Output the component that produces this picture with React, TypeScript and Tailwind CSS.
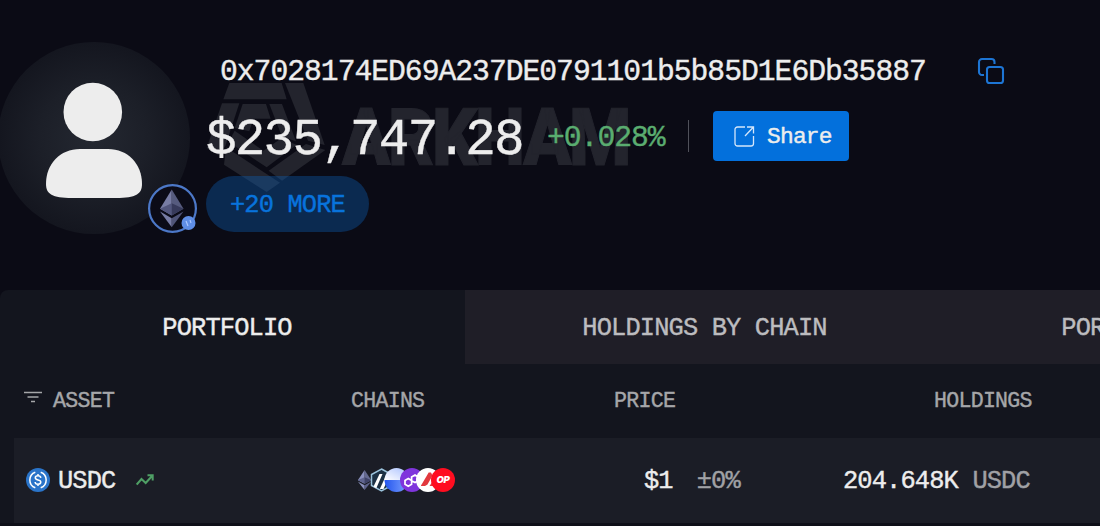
import { clsx } from "clsx";

const TABS = [
  { label: "PORTFOLIO", active: true },
  { label: "HOLDINGS BY CHAIN", active: false },
  { label: "PORTFOLIO ARCHIVE", active: false },
];

function Watermark() {
  return (
    <svg
      className="pointer-events-none absolute left-[200px] top-[78px]"
      width="440"
      height="120"
      viewBox="0 0 440 120"
    >
      <g fill="#23242d">
        <g transform="scale(0.33333)">
          <path d="M88 15H245L260 64H70Z" />
          <path d="M255 15H310L374 201L324 188Z" />
          <path d="M376 216L246 308L206 278L318 198Z" />
          <path d="M78 208L240 314L200 342L72 260Z" />
          <path d="M66 76H118L76 204L56 232L20 210Z" />
          <path d="M128 78H198L212 122H160L148 160L104 150Z" />
          <path d="M208 78H246L288 190L246 176Z" />
          <path d="M104 158L190 218L242 182L290 200L200 268L86 192Z" />
        </g>
        <text
          x="142"
          y="87"
          fontSize="80"
          fontWeight="900"
          textLength="287"
          lengthAdjust="spacingAndGlyphs"
          className="font-['Roboto',sans-serif]"
          stroke="#23242d"
        >
          ARKHAM
        </text>
      </g>
    </svg>
  );
}

function EthGlyph() {
  return (
    <>
      <path d="M12 1L5 12.4L12 16.4Z" fill="#8a90bd" />
      <path d="M12 1L19 12.4L12 16.4Z" fill="#646990" />
      <path d="M12 9.2L5 12.4L12 16.4Z" fill="#5f648f" />
      <path d="M12 9.2L19 12.4L12 16.4Z" fill="#3f4368" />
      <path d="M5 14L12 18.1V23.4Z" fill="#8a90bd" />
      <path d="M19 14L12 18.1V23.4Z" fill="#5c618a" />
    </>
  );
}

function Avatar() {
  return (
    <div className="relative -ml-[2px] h-[192px] w-[192px] rounded-full bg-[radial-gradient(circle,#242831_0%,#1c1f28_40%,#14161f_70%)]">
      <svg width="192" height="192" viewBox="0 0 192 192" fill="#ededed">
        <circle cx="94.8" cy="70" r="29.3" />
        <path d="M48 142C48 122 62 107 82 107H110C130 107 144 122 144 142C144 152 138 156 118 156H74C54 156 48 152 48 142Z" />
      </svg>
      <svg
        className="absolute left-[149px] top-[141px]"
        width="51"
        height="51"
        viewBox="0 0 51 51"
      >
        <circle cx="25.5" cy="25.5" r="23.4" fill="#0b0b17" stroke="#4c78c8" strokeWidth="2.2" />
        <g transform="translate(4.6 4.9) scale(1.68)" opacity="0.85">
          <EthGlyph />
        </g>
        <circle cx="41.500" cy="40" r="7" fill="#5f8ee6" />
        <path d="M39 38L41 43M43 37L44 40" stroke="#a9c6ff" strokeWidth="1.2" />
      </svg>
    </div>
  );
}

function CopyIcon() {
  return (
    <svg
      className="mb-[3px]"
      width="28"
      height="28"
      viewBox="0 0 28 28"
      fill="none"
      stroke="#1d75d4"
      strokeWidth="2.1"
    >
      <rect x="10" y="10" width="16" height="16" rx="2.6" />
      <path d="M7 18H5A3 3 0 0 1 2 15V5A3 3 0 0 1 5 2H14.500A3 3 0 0 1 17.500 5V7" />
    </svg>
  );
}

function ShareIcon() {
  return (
    <svg width="21" height="21" viewBox="0 0 21 21" fill="none" stroke="#d5e6fa" strokeWidth="1.3">
      <path d="M11 1H3.500A2.500 2.500 0 0 0 1 3.500V17.500A2.500 2.500 0 0 0 3.500 20H17A2.500 2.500 0 0 0 19.500 17.500V10" />
      <path d="M13 1H19.500V7.500M19.500 1L11 10" />
    </svg>
  );
}

function UsdcIcon() {
  return (
    <svg width="24" height="24" viewBox="0 0 24 24" fill="none" stroke="#fff" strokeWidth="1.5">
      <circle cx="12" cy="12" r="12" fill="#2a74c9" stroke="none" />
      <path d="M9.300 4.200A8.300 8.300 0 0 0 9.300 19.800M14.700 4.200A8.300 8.300 0 0 1 14.700 19.800" />
      <path d="M14.800 9.800C14.600 8.300 13.500 7.800 12 7.800C10.300 7.800 9.300 8.500 9.300 9.800C9.300 12.800 14.800 11 14.800 14.100C14.800 15.500 13.700 16.200 12 16.200C10.300 16.200 9.200 15.500 9.100 14M12 5.900V7.800M12 16.200V18.100" />
    </svg>
  );
}

function ChainIcons() {
  return (
    <svg className="-mt-px" width="97" height="26" viewBox="0 0 97 26">
      <g transform="translate(-4.9 2) scale(0.96 0.9)">
        <EthGlyph />
      </g>
      <path
        d="M23.500 2L33.500 7.500V18.500L23.500 24L13.500 18.500V7.500Z"
        fill="#1b3044"
        stroke="#9bc3dc"
        strokeWidth="1.5"
      />
      <path d="M15.500 19.500L21.500 7H24.500L18.300 21.300Z" fill="#fff" />
      <path d="M21.800 22L28 8.500L30 12L25.500 22Z" fill="#fff" />
      <path d="M27.500 17L30 22L34 19V8Z" fill="#2f7fd0" />
      <defs>
        <linearGradient id="baseTop" x1="0" x2="1" y1="1" y2="0">
          <stop offset="0" stopColor="#ffffff" />
          <stop offset="1" stopColor="#a9c0ff" />
        </linearGradient>
        <linearGradient id="baseBottom" x1="0" x2="1">
          <stop offset="0" stopColor="#2455ee" />
          <stop offset="1" stopColor="#7da3ff" />
        </linearGradient>
      </defs>
      <path d="M26.500 13A12 12 0 0 1 50.500 13Z" fill="url(#baseTop)" />
      <path d="M26.500 13A12 12 0 0 0 50.500 13Z" fill="url(#baseBottom)" />
      <circle cx="54" cy="13" r="12" fill="#7f35dc" />
      <g fill="none" stroke="#fff" strokeWidth="1.700">
        <path d="M53.600 13.500L50.300 11.600L47 13.500V17.300L50.300 19.200L53.600 17.300V10L57 8L60.300 10V13.700L57 15.600L54 14" />
      </g>
      <circle cx="70" cy="13" r="12" fill="#fff" />
      <path d="M63 18.500L70.700 5.500H73L74.500 8.500L69.500 17.500L67 19H63Z" fill="#e2393e" />
      <path d="M71.500 19L75.500 13L79 19Z" fill="#e2393e" />
      <circle cx="85" cy="13" r="12" fill="#ff0d20" />
      <text
        x="85"
        y="16.400"
        textAnchor="middle"
        fontSize="9.5"
        fontWeight="900"
        fontStyle="italic"
        fill="#fff"
        className="font-['Inter',sans-serif] [-webkit-text-stroke:0px]"
      >
        OP
      </text>
    </svg>
  );
}

export default function App() {
  return (
    <div className="h-[526px] w-[1100px] overflow-hidden bg-[#0b0b15] font-['Liberation_Mono',monospace] whitespace-pre text-[#ededed] [-webkit-text-stroke:0.4px] **:tracking-[-0.034em]">
      <header className="relative flex h-[290px] pt-[42px]">
        <Watermark />
        <Avatar />

        <div className="relative ml-4 flex flex-col items-start">
          <div className="flex h-[60px] items-center pl-[14px] text-[29.7px]">
            <span className="w-[757px]">0x7028174ED69A237DE0791101b5b85D1E6Db35887</span>
            <CopyIcon />
          </div>

          <div className="flex h-[68px] items-center">
            <span className="w-[341px] pt-[11px] text-[50.9px] leading-none">$235,747.28</span>
            <span className="w-[141px] pt-1 text-[29.7px] text-[#5aad70]">+0.028%</span>
            <span className="h-8 w-px bg-[#50515a]" />
            <button className="ml-6 flex h-[50px] w-[136px] items-center gap-3 rounded bg-[#0370dc] pl-[21px] text-[22.900px]">
              <ShareIcon />
              <span className="pt-[3px]">Share</span>
            </button>
          </div>

          <span className="mt-[6px] flex h-14 w-[163px] items-center justify-center rounded-full bg-[#0c63bf]/35 pt-1 text-[25.4px] text-[#0873dc]">
            +20 MORE
          </span>
        </div>
      </header>

      <main className="rounded-tl-lg bg-[#13151e]">
        <nav className="-ml-[14px] flex h-[74px] text-[25.4px]">
          {TABS.map((tab) => (
            <div
              key={tab.label}
              className={clsx(
                "flex w-[479px] shrink-0 items-center justify-center pt-1",
                tab.active ? "pl-[3px] text-[#ededed]" : "bg-[#1f1e27] text-[#bcbcbf]",
              )}
            >
              {tab.label}
            </div>
          ))}
        </nav>

        <div className="flex h-[74px] items-center text-[21.6px] text-[#a5a6a9]">
          <div className="flex w-[351px] items-center pl-6">
            <svg className="mb-[7px] mr-[11px]" width="18" height="12" viewBox="0 0 18 12" stroke="#a5a6a9" strokeWidth="1.5">
              <path d="M0 1.500H18M3.500 6H14.500M7 10.500H11" />
            </svg>
            ASSET
          </div>
          <div className="w-[263px]">CHAINS</div>
          <div className="w-[320px]">PRICE</div>
          <div>HOLDINGS</div>
        </div>

        <div className="ml-[14px] flex h-[85px] items-center bg-[#1b1d26] text-[25.4px]">
          <div className="flex w-[344px] items-center pl-3">
            <UsdcIcon />
            <span className="ml-2 w-[78px] pt-1">USDC</span>
            <svg width="18" height="12" viewBox="0 0 18 12" fill="none" stroke="#4f9f65" strokeWidth="2">
              <path d="M0.700 10.500L5.500 5L9.700 9L16.500 1.500M11.500 1.200H16.700V6.500" />
            </svg>
          </div>
          <div className="w-[286px]">
            <ChainIcons />
          </div>
          <div className="flex w-[199px] gap-6 pt-1">
            <span>$1</span>
            <span className="text-[#a0a1a5]">±0%</span>
          </div>
          <div className="pt-1">
            204.648K <span className="text-[#a0a1a5]">USDC</span>
          </div>
        </div>
        <div className="h-[3px] bg-[#0e0f18]" />
      </main>
    </div>
  );
}
